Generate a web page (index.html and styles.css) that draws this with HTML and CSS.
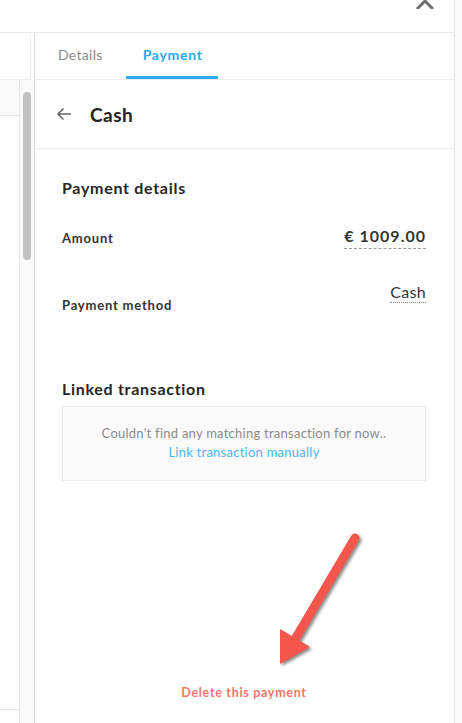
FILE: index.html
```html
<!DOCTYPE html>
<html>
<head>
<meta charset="utf-8">
<link rel="stylesheet" href="styles.css">
</head>
<body>
<div class="frame">
  <div class="main">
    <div class="topbar">
      <svg class="close" width="18" height="10" viewBox="0 0 18 10"><path d="M2 9 L9 2 L16 9" fill="none" stroke="#6f6f6f" stroke-width="3" stroke-linecap="square"/></svg>
    </div>
    <div class="body">
      <div class="left">
        <div class="left-head"></div>
        <div class="left-rest">
          <div class="list">
            <div class="list-head"></div>
            <div class="list-body"></div>
          </div>
          <div class="track"><div class="thumb"></div></div>
        </div>
      </div>
      <div class="panel">
        <div class="tabs">
          <div class="tab">Details</div>
          <div class="tab active">Payment</div>
        </div>
        <div class="header">
          <svg class="back" width="16" height="14" viewBox="0 0 16 14"><path d="M15 7 H2 M7.5 1.5 L2 7 L7.5 12.5" fill="none" stroke="#666" stroke-width="1.6"/></svg>
          <span class="title">Cash</span>
        </div>
        <div class="content">
          <h2 class="section">Payment details</h2>
          <div class="row amount-row">
            <span class="label">Amount</span>
            <span class="value amount">€ 1009.00</span>
          </div>
          <div class="row method-row">
            <span class="label method-label">Payment method</span>
            <span class="value method">Cash</span>
          </div>
          <h2 class="section linked">Linked transaction</h2>
          <div class="empty">
            <div class="empty-text">Couldn't find any matching transaction for now..</div>
            <div class="empty-link">Link transaction manually</div>
          </div>
          <div class="delete">Delete this payment</div>
        </div>
      </div>
    </div>
  </div>
  <div class="gutter"></div>
</div>
<svg class="annotation" width="462" height="723" viewBox="0 0 462 723">
  <g class="arrow">
    <line x1="355" y1="538" x2="294" y2="641" stroke="#f4564b" stroke-width="9" stroke-linecap="round"/>
    <polygon points="280,664 280,629 310,647" fill="#f4564b"/>
  </g>
</svg>
</body>
</html>
```

FILE: styles.css
```css
* { box-sizing: border-box; }
html, body { margin: 0; padding: 0; }
body {
  width: 462px;
  height: 723px;
  overflow: hidden;
  font-family: "Lato", "Open Sans", sans-serif;
  color: #262626;
  background: #fff;
  position: relative;
}
.frame { display: flex; height: 723px; }
.main {
  width: 455px;
  border-right: 1px solid #e6e6e6;
  display: flex;
  flex-direction: column;
}
.gutter { flex: 1; background: #fafafa; }
.topbar {
  height: 33px;
  border-bottom: 1px solid #e8e8e8;
  display: flex;
  justify-content: flex-end;
  align-items: flex-start;
  padding-right: 20px;
}
.close { display: block; margin-top: -1px; }
.body { flex: 1; display: flex; min-height: 0; }
.left { width: 34px; display: flex; flex-direction: column; }
.left-head {
  height: 47px;
  width: 31px;
  border-right: 1px solid #f0f0f0;
  border-bottom: 1px solid #ececec;
}
.left-rest { flex: 1; display: flex; }
.list {
  width: 20px;
  border-right: 1px solid #e4e4e4;
  display: flex;
  flex-direction: column;
}
.list-head { height: 36px; background: #f9f9f9; border-bottom: 1px solid #e6e6e6; }
.list-body { flex: 1; background: #fff; border-bottom: 1px solid #e6e6e6; margin-bottom: 13px; }
.track {
  flex: 1;
  background: #fafafa;
  padding: 12px 0 0 3px;
}
.thumb {
  width: 8px;
  height: 168px;
  border-radius: 4px;
  background: #c1c1c1;
}
.panel {
  flex: 1;
  border-left: 1px solid #dcdcdc;
  display: flex;
  flex-direction: column;
}
.tabs {
  height: 47px;
  border-bottom: 1px solid #ececec;
  display: flex;
  padding-left: 7px;
  gap: 7px;
}
.tab {
  padding: 0 16px;
  font-size: 14px;
  line-height: 44px;
  color: #8a8a8a;
  letter-spacing: 0.3px;
  border-bottom: 3px solid transparent;
}
.tab.active {
  color: #2ea8f2;
  font-weight: 700;
  letter-spacing: 0.7px;
  border-bottom-color: #2ea8f2;
  padding: 0 15px 0 17px;
}
.header {
  height: 69px;
  border-bottom: 1px solid #ececec;
  display: flex;
  align-items: center;
  padding-left: 21px;
}
.back { display: block; margin-right: 18px; }
.title { font-size: 19px; font-weight: 700; color: #222; letter-spacing: 0.5px; }
.content {
  flex: 1;
  display: flex;
  flex-direction: column;
  padding: 29px 28px 23px 27px;
}
.section {
  margin: 0;
  font-size: 16px;
  line-height: 20px;
  font-weight: 700;
  letter-spacing: 0.7px;
  color: #262626;
}
.row { display: flex; justify-content: space-between; }
.amount-row { margin-top: 28px; align-items: center; }
.label { font-size: 13px; font-weight: 700; color: #333; letter-spacing: 0.8px; }
.value { color: #333; }
.amount {
  font-size: 16px;
  font-weight: 700;
  line-height: 20px;
  letter-spacing: 1px;
  padding-bottom: 2px;
  border-bottom: 1px dashed #999;
}
.method-row { margin-top: 33px; align-items: flex-start; }
.method-label { margin-top: 15px; }
.method {
  font-size: 16px;
  line-height: 20px;
  letter-spacing: 0.3px;
  border-bottom: 1px dotted #888;
}
.linked { margin-top: 66px; }
.empty {
  margin-top: 7px;
  height: 75px;
  background: #fafafa;
  border: 1px solid #ececec;
  text-align: center;
  padding-top: 17px;
  font-size: 13px;
  line-height: 19px;
  letter-spacing: 0.25px;
}
.empty-text { color: #8a8a8a; }
.empty-link { color: #4cb4f2; }
.delete {
  margin-top: auto;
  text-align: center;
  font-size: 12.5px;
  font-weight: 700;
  letter-spacing: 0.7px;
  color: #f5766c;
}
.annotation {
  position: absolute;
  left: 0;
  top: 0;
  pointer-events: none;
}
.arrow { filter: drop-shadow(2px 2px 1.5px rgba(0,0,0,0.45)); }
```
